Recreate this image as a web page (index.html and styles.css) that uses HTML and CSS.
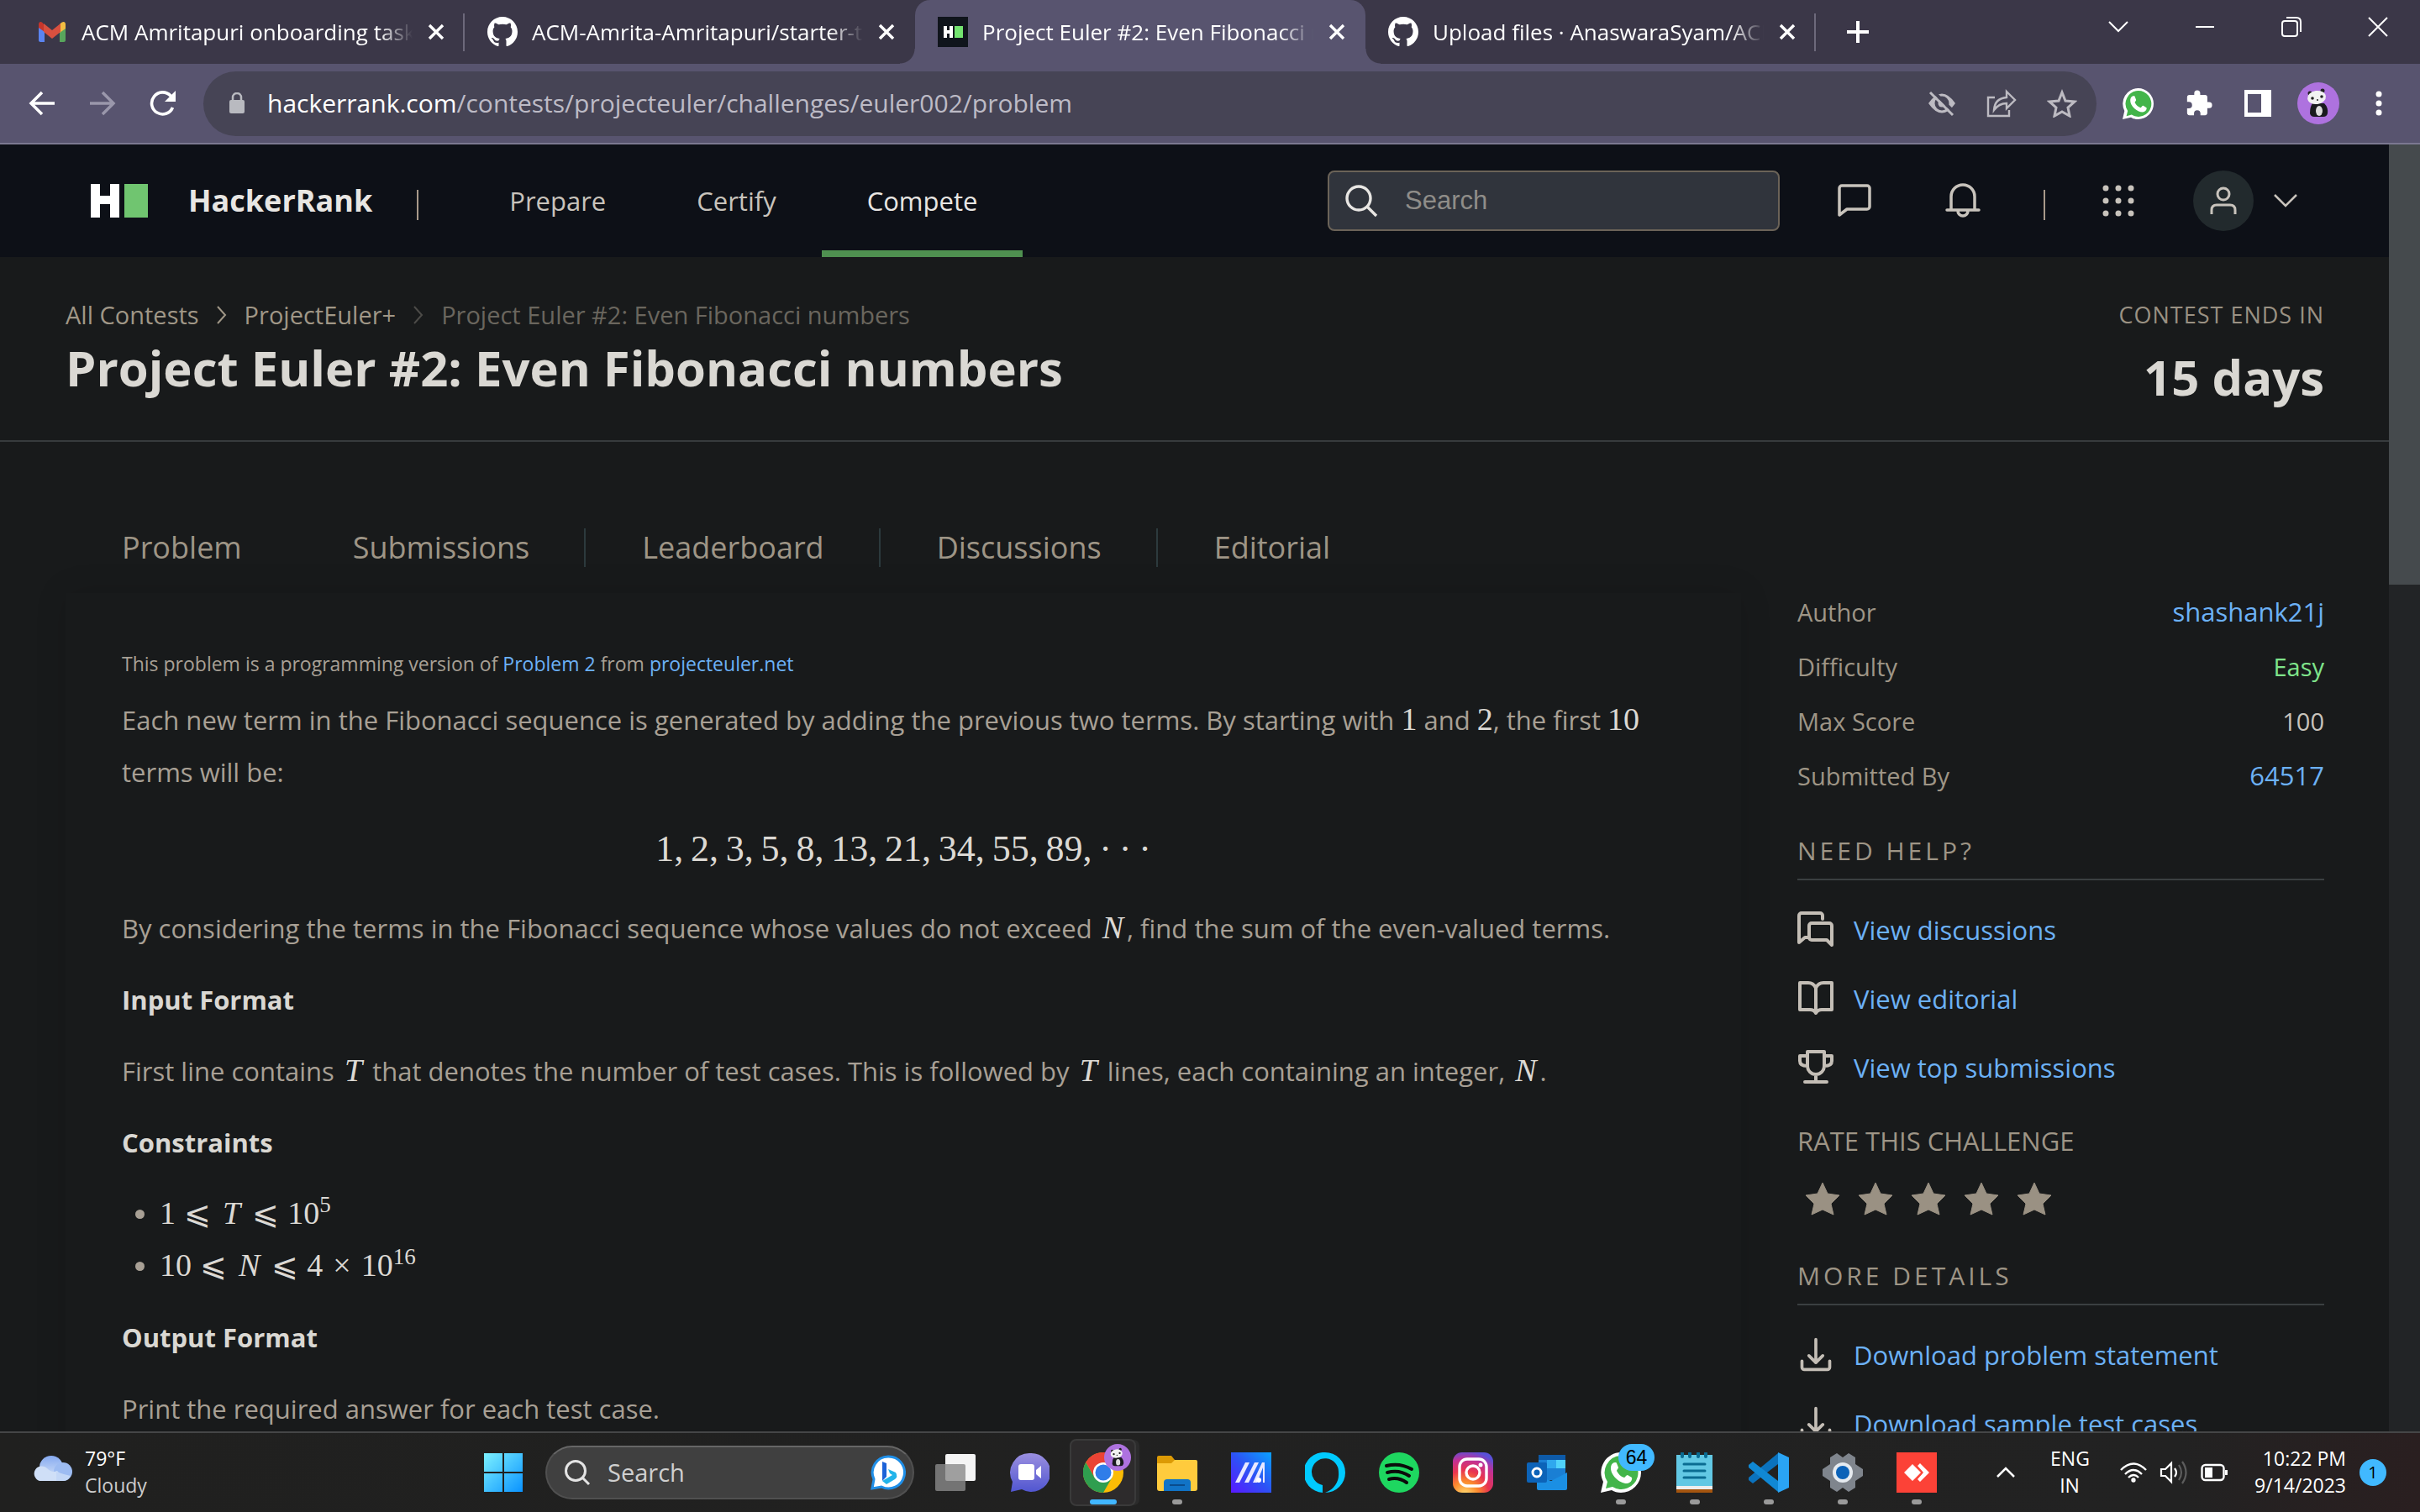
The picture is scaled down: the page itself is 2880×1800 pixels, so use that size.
FILE: index.html
```html
<!DOCTYPE html>
<html lang="en">
<head>
<meta charset="utf-8">
<title>Project Euler #2: Even Fibonacci numbers</title>
<link rel="stylesheet" href="styles.css">
</head>
<body>
<svg class="defs" aria-hidden="true">
  <symbol id="i-x" viewBox="0 0 20 20"><path d="M2 2l16 16M18 2L2 18" stroke="currentColor" stroke-width="3.4"/></symbol>
  <symbol id="i-github" viewBox="0 0 16 16"><path fill="currentColor" d="M8 0C3.58 0 0 3.58 0 8c0 3.54 2.29 6.53 5.47 7.59.4.07.55-.17.55-.38 0-.19-.01-.82-.01-1.49-2.01.37-2.53-.49-2.69-.94-.09-.23-.48-.94-.82-1.13-.28-.15-.68-.52-.01-.53.63-.01 1.08.58 1.23.82.72 1.21 1.87.87 2.33.66.07-.52.28-.87.51-1.07-1.78-.2-3.64-.89-3.64-3.95 0-.87.31-1.59.82-2.15-.08-.2-.36-1.02.08-2.12 0 0 .67-.21 2.2.82.64-.18 1.32-.27 2-.27s1.36.09 2 .27c1.53-1.04 2.2-.82 2.2-.82.44 1.1.16 1.92.08 2.12.51.56.82 1.27.82 2.15 0 3.07-1.87 3.75-3.65 3.95.29.25.54.73.54 1.48 0 1.07-.01 1.93-.01 2.2 0 .21.15.46.55.38A8.01 8.01 0 0 0 16 8c0-4.42-3.58-8-8-8z"/></symbol>
  <symbol id="i-star" viewBox="0 0 42 40"><path fill="currentColor" d="M21 1l6 13 14 2-10 10 3 13-13-6-13 6 3-13L1 16l14-2z" stroke="currentColor" stroke-width="1" stroke-linejoin="round"/></symbol>
  <symbol id="i-download" viewBox="0 0 24 24"><path d="M12 2v15M7.500 12.500L12 17l4.500-4.500M3 16v4a1.500 1.500 0 0 0 1.500 1.500h15A1.500 1.500 0 0 0 21 20v-4" fill="none" stroke="currentColor" stroke-width="2" stroke-linecap="round" stroke-linejoin="round"/></symbol>
  <symbol id="i-whatsapp" viewBox="0 0 48 48"><path fill="#fff" d="M24 0a24 24 0 0 1 0 48c-4 0-8-1-11-3L0 48l3-13A24 24 0 0 1 24 0z"/><path fill="#43b54a" d="M24 4a20 20 0 1 1-10 37l-8 2 2-8A20 20 0 0 1 24 4z"/><path fill="#fff" d="M17 12c1 0 2 0 2 1l2 5c0 1-2 3-2 4 2 4 5 7 9 8 1 0 2-3 4-3l5 3c1 3-2 7-6 7-9 0-19-10-19-18 0-4 2-7 5-7z"/></symbol>
  <symbol id="i-panda" viewBox="0 0 50 50"><circle cx="25" cy="25" r="25" fill="#ae72df"/><path fill="#191a1e" d="M18 25h14q5 5 4 12-1 4-5 4H20q-4 0-5-4 0-8 3-12z"/><ellipse cx="26" cy="34" rx="4" ry="6" fill="#ddd"/><circle cx="15" cy="13" r="2.500" fill="#222"/><circle cx="30" cy="10" r="2.500" fill="#222"/><ellipse cx="23" cy="18" rx="11" ry="8" transform="rotate(-8 23 18)" fill="#f2f2f2"/><circle cx="18" cy="19" r="1.800" fill="#222"/><circle cx="29" cy="17" r="1.800" fill="#222"/><circle cx="24" cy="21" r="1" fill="#222"/></symbol>
</svg>

<header class="browser">
  <div class="tabstrip">
    <div class="tab">
      <svg class="favicon" viewBox="0 0 36 36"><path fill="#c5362b" d="M2 9v5l6 5V9C6 5 2 5 2 9z"/><path fill="#5b84f0" d="M2 13l7 5v12H4c-1 0-2-1-2-2z"/><path fill="#58a55c" d="M34 13l-7 5v12h5c1 0 2-1 2-2z"/><path fill="#f2bd42" d="M34 9v5l-7 5V9c3-4 7-4 7 0z"/><path fill="#d8503f" d="M8 8l10 8 10-8v10l-10 8-10-8z"/></svg>
      <span class="tab-title">ACM Amritapuri onboarding task</span>
      <button class="icon-btn" aria-label="Close tab"><svg class="x"><use href="#i-x"/></svg></button>
    </div>
    <div class="tab before-active">
      <svg class="favicon"><use href="#i-github"/></svg>
      <span class="tab-title">ACM-Amrita-Amritapuri/starter-task</span>
      <button class="icon-btn" aria-label="Close tab"><svg class="x"><use href="#i-x"/></svg></button>
    </div>
    <div class="tab active">
      <svg class="favicon" viewBox="0 0 36 36"><path fill="#10151c" d="M0 0h36v36H0z"/><path fill="#fff" d="M7 11h4v5h3v-5h4v14h-4v-5h-3v5H7z"/><path fill="#73e36f" d="M20 11h10v14H20z"/></svg>
      <span class="tab-title">Project Euler #2: Even Fibonacci numbers</span>
      <button class="icon-btn" aria-label="Close tab"><svg class="x"><use href="#i-x"/></svg></button>
    </div>
    <div class="tab">
      <svg class="favicon"><use href="#i-github"/></svg>
      <span class="tab-title">Upload files · AnaswaraSyam/ACM</span>
      <button class="icon-btn" aria-label="Close tab"><svg class="x"><use href="#i-x"/></svg></button>
    </div>
    <button class="icon-btn new-tab" aria-label="New tab"><svg width="28" height="28" viewBox="0 0 28 28"><path d="M14 1v26M1 14h26" stroke="#fff" stroke-width="4"/></svg></button>
    <div class="window-controls">
      <button class="icon-btn" aria-label="Search tabs"><svg width="24" height="24" viewBox="0 0 24 24"><path d="M1 6l11 11L23 6"/></svg></button>
      <button class="icon-btn" aria-label="Minimise"><svg width="24" height="24" viewBox="0 0 24 24"><path d="M1 12h22"/></svg></button>
      <button class="icon-btn" aria-label="Restore"><svg width="24" height="24" viewBox="0 0 24 24"><rect x="1" y="5" width="18" height="18" rx="3"/><path d="M6 1h12q5 0 5 5v12"/></svg></button>
      <button class="icon-btn" aria-label="Close window"><svg width="24" height="24" viewBox="0 0 24 24"><path d="M1 1l22 22M23 1L1 23"/></svg></button>
    </div>
  </div>
  <div class="toolbar">
    <div class="nav-buttons">
      <button class="icon-btn" aria-label="Back"><svg width="32" height="32" viewBox="0 0 32 32"><path d="M31 16H3M16 3L3 16l13 13" fill="none" stroke="#fff" stroke-width="3.500"/></svg></button>
      <button class="icon-btn" aria-label="Forward"><svg width="32" height="32" viewBox="0 0 32 32"><path d="M1 16h28M16 3l13 13-13 13" fill="none" stroke="#9a97ab" stroke-width="3.500"/></svg></button>
      <button class="icon-btn" aria-label="Reload"><svg width="32" height="32" viewBox="0 0 32 32"><path d="M27.500 21A13 13 0 1 1 25 7l3 4" fill="none" stroke="#fff" stroke-width="3.600"/><path d="M31 1v13H18z" fill="#fff"/></svg></button>
    </div>
    <div class="address">
      <svg width="18" height="26" viewBox="0 0 18 26"><rect y="9" width="18" height="16" rx="2" fill="#b9bac0"/><path d="M4 10V6a5 5 0 0 1 10 0v4" fill="none" stroke="#b9bac0" stroke-width="2.500"/></svg>
      <span class="url"><span class="host">hackerrank.com</span>/contests/projecteuler/challenges/euler002/problem</span>
      <div class="address-actions">
        <button class="icon-btn" aria-label="Third-party cookies blocked"><svg width="34" height="34" viewBox="0 0 34 34"><path d="M1 17Q17-6 33 17 17 40 1 17z" fill="#bdbbc2"/><circle cx="17" cy="17" r="8.500" fill="#464455"/><circle cx="17" cy="17" r="4.500" fill="#bdbbc2"/><path d="M5 1l28 28" stroke="#464455" stroke-width="4"/><path d="M3 4l27 27" stroke="#bdbbc2" stroke-width="3"/></svg></button>
        <button class="icon-btn" aria-label="Share"><svg width="36" height="34" viewBox="0 0 36 34" fill="none" stroke="#bdbbc2" stroke-width="2.400"><path d="M10 10H2v22h25v-7"/><path d="M24 3l10 10-10 10v-6q-9 0-15 8 1-14 15-15z"/></svg></button>
        <button class="icon-btn" aria-label="Bookmark"><svg width="36" height="34" viewBox="0 0 36 34"><path d="M18 4l4 10 11 1-8 7 2 10-9-5-9 5 2-10-8-7 11-1z" fill="none" stroke="#bdbbc2" stroke-width="3"/></svg></button>
      </div>
    </div>
    <div class="extensions">
      <button class="icon-btn" aria-label="WhatsApp extension"><svg width="37" height="37"><use href="#i-whatsapp"/></svg></button>
      <button class="icon-btn" aria-label="Extensions"><svg width="34" height="34" viewBox="0 0 24 24"><path fill="#fff" d="M20.500 11H19V7a2 2 0 0 0-2-2h-4V3.500a2.500 2.500 0 0 0-5 0V5H4a2 2 0 0 0-2 2v3.800h1.500a2.700 2.700 0 0 1 0 5.400H2V20a2 2 0 0 0 2 2h3.800v-1.500a2.700 2.700 0 0 1 5.400 0V22H17a2 2 0 0 0 2-2v-4h1.500a2.500 2.500 0 0 0 0-5z"/></svg></button>
      <button class="icon-btn" aria-label="Side panel"><svg width="32" height="32" viewBox="0 0 32 32"><path fill="#fff" fill-rule="evenodd" d="M0 0h32v32H0zM4 5v22h16V5z"/></svg></button>
      <button class="icon-btn" aria-label="Profile"><svg width="50" height="50"><use href="#i-panda"/></svg></button>
      <button class="icon-btn" aria-label="Menu"><svg width="8" height="30" viewBox="0 0 8 30" fill="#fff"><circle cx="4" cy="4" r="3.500"/><circle cx="4" cy="15" r="3.500"/><circle cx="4" cy="26" r="3.500"/></svg></button>
    </div>
  </div>
</header>

<div class="viewport">
  <div class="page">
    <header class="site-header">
      <a class="brand" href="#"><svg width="68" height="40" viewBox="0 0 68 40"><path fill="#fff" d="M0 0h11v14h12V0h11v40H23V24H11v16H0z"/><path fill="#70c570" d="M40 0h28v40H40z"/></svg><span>HackerRank</span></a>
      <span class="pipe"></span>
      <nav class="site-nav"><a href="#">Prepare</a><a href="#">Certify</a><a class="current" href="#">Compete</a></nav>
      <label class="search"><svg width="40" height="40" viewBox="0 0 40 40"><circle cx="17" cy="17" r="14" fill="none" stroke="#e8e6e3" stroke-width="3.400"/><path d="M27 27l11 11" stroke="#e8e6e3" stroke-width="3.400"/></svg><input type="text" placeholder="Search" aria-label="Search"></label>
      <div class="site-actions">
        <button class="icon-btn" aria-label="Messages"><svg width="40" height="40" viewBox="0 0 40 40"><path d="M2 37V5a3 3 0 0 1 3-3h30a3 3 0 0 1 3 3v22a3 3 0 0 1-3 3H11z" fill="none" stroke="#c8c3bc" stroke-width="3.500" stroke-linejoin="round"/></svg></button>
        <button class="icon-btn" aria-label="Notifications"><svg width="42" height="42" viewBox="0 0 42 42" fill="none" stroke="#c8c3bc" stroke-width="3.500" stroke-linecap="round"><path d="M2 32h38M7 31V16a14 14 0 0 1 28 0v15M15 33a6 6 0 0 0 12 0"/></svg></button>
        <span class="pipe"></span>
        <button class="icon-btn" aria-label="Apps"><svg width="38" height="38" viewBox="0 0 38 38" fill="#c8c3bc"><circle cx="4" cy="4" r="3.500"/><circle cx="19" cy="4" r="3.500"/><circle cx="34" cy="4" r="3.500"/><circle cx="4" cy="19" r="3.500"/><circle cx="19" cy="19" r="3.500"/><circle cx="34" cy="19" r="3.500"/><circle cx="4" cy="34" r="3.500"/><circle cx="19" cy="34" r="3.500"/><circle cx="34" cy="34" r="3.500"/></svg></button>
        <button class="icon-btn account" aria-label="Account"><span class="avatar"><svg width="32" height="34" viewBox="0 0 32 34" fill="none" stroke="#c8c3bc" stroke-width="3"><circle cx="16" cy="9" r="7"/><path d="M2 33v-5q0-6 6-6h16q6 0 6 6v5"/></svg></span><svg width="30" height="18" viewBox="0 0 30 18"><path d="M2 2l13 13L28 2" fill="none" stroke="#c8c3bc" stroke-width="2.500"/></svg></button>
      </div>
    </header>

    <section class="contest-head">
      <div>
        <nav class="crumbs"><a href="#">All Contests</a><svg class="crumb-sep" viewBox="0 0 12 22"><path d="M1 1l9 10-9 10"/></svg><a href="#">ProjectEuler+</a><svg class="crumb-sep dim" viewBox="0 0 12 22"><path d="M1 1l9 10-9 10"/></svg><span class="here">Project Euler #2: Even Fibonacci numbers</span></nav>
        <h1>Project Euler #2: Even Fibonacci numbers</h1>
      </div>
      <div class="countdown"><div class="countdown-label">CONTEST ENDS IN</div><div class="countdown-value">15 days</div></div>
    </section>

    <nav class="challenge-tabs"><a href="#">Problem</a><a href="#">Submissions</a><a href="#">Leaderboard</a><a href="#">Discussions</a><a href="#">Editorial</a></nav>

    <div class="columns">
      <main class="statement">
        <p class="note">This problem is a programming version of <a href="#">Problem 2</a> from <a href="#">projecteuler.net</a></p>
        <p>Each new term in the Fibonacci sequence is generated by adding the previous two terms. By starting with <span class="math">1</span> and <span class="math">2</span>, the first <span class="math">10</span> terms will be:</p>
        <p class="display-math">1,&thinsp;2,&thinsp;3,&thinsp;5,&thinsp;8,&thinsp;13,&thinsp;21,&thinsp;34,&thinsp;55,&thinsp;89,&thinsp;·&thinsp;·&thinsp;·</p>
        <p>By considering the terms in the Fibonacci sequence whose values do not exceed <var>N</var>, find the sum of the even-valued terms.</p>
        <h2>Input Format</h2>
        <p>First line contains <var>T</var> that denotes the number of test cases. This is followed by <var>T</var> lines, each containing an integer, <var>N</var>.</p>
        <h2>Constraints</h2>
        <ul>
          <li><span class="math">1<span class="rel">⩽</span><var>T</var><span class="rel">⩽</span>10<sup>5</sup></span></li>
          <li><span class="math">10<span class="rel">⩽</span><var>N</var><span class="rel">⩽</span>4<span class="times">×</span>10<sup>16</sup></span></li>
        </ul>
        <h2>Output Format</h2>
        <p>Print the required answer for each test case.</p>
      </main>
      <aside class="sidebar">
        <dl class="facts">
          <div><dt>Author</dt><dd class="big"><a href="#">shashank21j</a></dd></div>
          <div><dt>Difficulty</dt><dd class="easy">Easy</dd></div>
          <div><dt>Max Score</dt><dd>100</dd></div>
          <div><dt>Submitted By</dt><dd class="big"><a href="#">64517</a></dd></div>
        </dl>
        <h3>NEED HELP?</h3>
        <ul class="links">
          <li><svg class="link-icon" viewBox="0 0 44 44"><path d="M30 9V5a3 3 0 0 0-3-3H5a3 3 0 0 0-3 3v32l7-6h3M17 14h21a3 3 0 0 1 3 3v23l-6-6H17a3 3 0 0 1-3-3V17a3 3 0 0 1 3-3z"/></svg><a href="#">View discussions</a></li>
          <li><svg class="link-icon" viewBox="0 0 44 44"><path d="M22 9q-3-6-9-6H3v32h12q5 0 7 4 2-4 7-4h12V3H31q-6 0-9 6zv30"/></svg><a href="#">View editorial</a></li>
          <li><svg class="link-icon" viewBox="0 0 44 44"><path d="M12 3h20v17a10 10 0 0 1-20 0zM12 8H3v6q0 6 9 6M32 8h9v6q0 6-9 6M22 30v9M9 39h26"/></svg><a href="#">View top submissions</a></li>
        </ul>
        <h4>RATE THIS CHALLENGE</h4>
        <div class="stars"><button class="icon-btn" aria-label="1 star"><svg><use href="#i-star"/></svg></button><button class="icon-btn" aria-label="2 stars"><svg><use href="#i-star"/></svg></button><button class="icon-btn" aria-label="3 stars"><svg><use href="#i-star"/></svg></button><button class="icon-btn" aria-label="4 stars"><svg><use href="#i-star"/></svg></button><button class="icon-btn" aria-label="5 stars"><svg><use href="#i-star"/></svg></button></div>
        <h3>MORE DETAILS</h3>
        <ul class="links">
          <li><svg class="link-icon thin"><use href="#i-download"/></svg><a href="#">Download problem statement</a></li>
          <li><svg class="link-icon thin"><use href="#i-download"/></svg><a href="#">Download sample test cases</a></li>
        </ul>
      </aside>
    </div>
  </div>
  <div class="scrollbar"><div class="thumb"></div></div>
</div>

<footer class="taskbar">
  <div class="weather">
    <svg width="50" height="32" viewBox="0 0 50 32"><defs><linearGradient id="g-cloud" x2="0" y2="1"><stop stop-color="#86aaf0"/><stop offset="1" stop-color="#d6e4f8"/></linearGradient></defs><circle cx="24" cy="15" r="14" fill="url(#g-cloud)"/><circle cx="38" cy="20" r="11" fill="#9dbcf2"/><path fill="#cfdff7" d="M10 31a9 9 0 1 1 9-15q6 6 12 3l6 6q4 6-4 6z"/><path fill="#c3d7f6" d="M30 31V20q8 3 17 5-3 6-9 6z"/></svg>
    <div class="label"><div>79°F</div><div class="muted">Cloudy</div></div>
  </div>
  <div class="dock">
    <button class="app start" aria-label="Start"><svg viewBox="0 0 48 48"><defs><linearGradient id="g-win" x2="1" y2="1"><stop stop-color="#7cf1ff"/><stop offset="1" stop-color="#0a93ff"/></linearGradient></defs><path fill="url(#g-win)" d="M1 1h22v22H1zM25 1h22v22H25zM1 25h22v22H1zM25 25h22v22H25z"/></svg></button>
    <label class="os-search"><svg width="32" height="32" viewBox="0 0 32 32" fill="none" stroke="#e4e4e4" stroke-width="3"><circle cx="14" cy="14" r="11.500"/><path d="M22 22l8 8"/></svg><input type="text" placeholder="Search" aria-label="Search Windows"><svg width="42" height="42" viewBox="0 0 42 42"><path d="M21 2a19 19 0 1 1-8 36L2 40l2-11A19 19 0 0 1 21 2z" fill="#fff" stroke="#1f8fe8" stroke-width="3"/><path d="M14 8l5 2v16l-5 5z" fill="#1b62d8"/><path d="M14 31l12-7-3-2-2-5 9 4q3 5-1 8l-10 6z" fill="#22b4ea"/></svg></label>
    <button class="app" aria-label="Task view"><svg viewBox="0 0 48 48"><rect x="12" y="2" width="36" height="32" rx="2" fill="#f4f4f4"/><rect y="14" width="36" height="32" rx="2" fill="#8a8a8a" opacity=".8"/></svg></button>
    <button class="app" aria-label="Chat"><svg viewBox="0 0 48 48"><defs><linearGradient id="g-chat" x2="0" y2="1"><stop stop-color="#9a8fe0"/><stop offset="1" stop-color="#5156d0"/></linearGradient></defs><path fill="url(#g-chat)" d="M25 1a23 23 0 1 1-10 43L2 47l2-12A23 23 0 0 1 25 1z"/><rect x="11" y="14" width="19" height="19" rx="3" fill="#fff"/><path fill="#fff" d="M32 21l6-5v15l-6-5z"/></svg></button>
    <button class="app focused" aria-label="Chrome"><svg viewBox="0 0 48 48"><circle cx="24" cy="24" r="24" fill="#fbbc05"/><path fill="#ea4335" d="M24 12h20.800A24 24 0 0 0 3.200 12l10.400 18z"/><path fill="#2f9e4f" d="M34.400 30L24 48A24 24 0 0 1 3.200 12l10.400 18z"/><circle cx="24" cy="24" r="12" fill="#fff"/><circle cx="24" cy="24" r="9.500" fill="#2f7de9"/></svg><svg class="app-avatar"><use href="#i-panda"/></svg></button>
    <button class="app running" aria-label="File Explorer"><svg viewBox="0 0 48 48"><path fill="#dc9a05" d="M2 4h15l4 5v8H0V6q0-2 2-2z"/><path fill="#ffcb3d" d="M0 13h17l4-4h25q2 0 2 2v32q0 3-3 3H3q-3 0-3-3z"/><path fill="#1173c6" d="M8 46V36q0-4 4-4h24q4 0 4 4v10z"/><path d="M15 39h18" stroke="#0a4c8c" stroke-width="2"/></svg></button>
    <button class="app" aria-label="MyASUS"><svg viewBox="0 0 48 48"><defs><linearGradient id="g-ma" x1="1" x2="0" y2="1"><stop stop-color="#0aa2ff"/><stop offset=".5" stop-color="#2d52f5"/><stop offset="1" stop-color="#5a18ff"/></linearGradient></defs><path fill="url(#g-ma)" d="M0 0h48v48H0z"/><path fill="#e8e8ff" d="M5 36l12-24h5L10 36zM16 36l12-24h5L21 36zM26 36l11-24h3v24h-2V18l-7 18z"/><circle cx="33" cy="33" r="3" fill="#fff"/></svg></button>
    <button class="app" aria-label="Alexa"><svg viewBox="0 0 48 48"><path fill="#00caff" fill-rule="evenodd" d="M24 0a24 24 0 0 1 0 48 23 23 0 0 0 16-24 16 16 0 1 0-19 15v9A24 24 0 0 1 24 0z"/></svg></button>
    <button class="app" aria-label="Spotify"><svg viewBox="0 0 48 48"><circle cx="24" cy="24" r="24" fill="#1ed760"/><path d="M9 16q16-4 30 4M10 24q14-4 26 4M12 32q11-3 21 4" fill="none" stroke="#0b0b0b" stroke-width="4" stroke-linecap="round"/></svg></button>
    <button class="app" aria-label="Instagram"><svg viewBox="0 0 48 48"><defs><radialGradient id="g-ig" cx=".3" cy="1.050" r="1.100"><stop stop-color="#ffdd72"/><stop offset=".3" stop-color="#fb8a2e"/><stop offset=".55" stop-color="#e9344f"/><stop offset=".8" stop-color="#c13196"/><stop offset="1" stop-color="#5a50d8"/></radialGradient></defs><rect width="48" height="48" rx="11" fill="url(#g-ig)"/><g fill="none" stroke="#fff" stroke-width="3.400"><rect x="8" y="8" width="32" height="32" rx="9"/><circle cx="24" cy="24" r="8"/></g><circle cx="33" cy="15" r="2.500" fill="#fff"/></svg></button>
    <button class="app" aria-label="Outlook"><svg viewBox="0 0 48 48"><rect x="14" y="3" width="32" height="30" rx="2" fill="#1a7fd4"/><path fill="#0d5aa8" d="M14 3h32v6H14z"/><path fill="#50d2fa" d="M35 9h11v10H35z"/><path fill="#2fa8ee" d="M24 9h11v10H24z"/><path fill="#1b8fe3" d="M12 28l17 6 19-10v19q0 2-2 2H14q-2 0-2-2z"/><rect y="12" width="24" height="24" rx="2" fill="#0c63b8"/><circle cx="12" cy="24" r="5" fill="none" stroke="#fff" stroke-width="3"/></svg></button>
    <button class="app running" aria-label="WhatsApp, 64 unread"><svg><use href="#i-whatsapp"/></svg><span class="app-badge">64</span></button>
    <button class="app running" aria-label="Notepad"><svg viewBox="0 0 48 48"><path fill="#a4550f" d="M2 42h43v6H2z"/><path fill="#eee" d="M2 38h43v6H2z"/><path fill="#62c8e4" d="M2 3h43v37H2z"/><path d="M9 1v4M18 1v4M28 1v4M37 1v4" stroke="#0a6c92" stroke-width="4" stroke-linecap="round"/><path d="M11 14h25M11 22h25M11 30h25" stroke="#0a6c92" stroke-width="3" stroke-linecap="round"/></svg></button>
    <button class="app running" aria-label="Visual Studio Code"><svg viewBox="0 0 48 48"><path fill="#0b72bd" d="M35 1v13L5 37l-5-4v-3z"/><path fill="#1088d4" d="M35 47V34L5 11l-5 4v3z"/><path fill="#2aa4f4" d="M35 0l13 6v36l-13 6z"/></svg></button>
    <button class="app running" aria-label="Settings"><svg viewBox="0 0 48 48"><path fill="#7f858d" d="M17 1l7 5 7-5 8 5v8l9 6v8l-9 6v8l-8 5-7-5-7 5-8-5v-8l-9-6v-8l9-6V6z"/><circle cx="24" cy="24" r="12" fill="#e6ebf0"/><circle cx="24" cy="24" r="8" fill="#0b62b8"/></svg></button>
    <button class="app running" aria-label="AnyDesk"><svg viewBox="0 0 48 48"><path fill="#fc4237" d="M0 0h48v48H0z"/><path fill="#fff" d="M19 14l10 10-10 10L9 24zM25 16l3-3 11 11-11 11-3-3 7-8z"/></svg></button>
  </div>
  <div class="tray">
    <svg width="22" height="14" viewBox="0 0 22 14"><path d="M1 12L11 2l10 10" fill="none" stroke="#fff" stroke-width="2.500"/></svg>
    <div class="lang label"><div>ENG</div><div>IN</div></div>
    <div class="status">
      <svg width="32" height="24" viewBox="0 0 32 24" fill="none" stroke="#fff" stroke-width="2.400"><path d="M1 9q15-15 30 0M6 14q10-10 20 0M10 18q6-6 12 0"/><circle cx="16" cy="21" r="1.500"/></svg>
      <svg width="34" height="28" viewBox="0 0 34 28" fill="none" stroke="#fff" stroke-width="2.200"><path d="M2 10v8h5l7 7V3l-7 7zM18 9q4 5 0 10"/><path d="M23 5q6 9 0 18M27 1q9 13 0 26" stroke="#5c5c5c"/></svg>
      <svg width="32" height="22" viewBox="0 0 32 22"><rect x="1.500" y="2" width="26" height="18" rx="4" fill="none" stroke="#fff" stroke-width="2.400"/><path fill="#fff" d="M5 5h9v12H5zM29 8h3v6h-3z"/></svg>
    </div>
    <div class="clock label"><div>10:22 PM</div><div>9/14/2023</div></div>
    <span class="notice-count">1</span>
  </div>
</footer>
</body>
</html>
```
FILE: styles.css
```css
* { box-sizing: border-box; }
body {
  margin: 0;
  height: 100vh;
  display: flex;
  flex-direction: column;
  overflow: hidden;
  background: #181a1b;
  font-family: "Open Sans", "Noto Sans", sans-serif;
  color: #a8a095;
}
a { color: inherit; text-decoration: none; }
svg { display: block; flex: none; }
.defs { position: absolute; width: 0; height: 0; }
h1, h2, h3, h4, p, ul, dl, dd { margin: 0; padding: 0; }
.icon-btn { border: 0; padding: 0; background: none; color: inherit; display: flex; align-items: center; justify-content: center; flex: none; }

/* Browser chrome */
.browser { flex: none; color: #fff; border-bottom: 2px solid #7b7891; background: #58546f; }
.tabstrip { display: flex; align-items: center; height: 76px; padding-left: 17px; background: #3b3748; }
.tab { position: relative; flex: 0 1 536px; min-width: 0; height: 76px; display: flex; align-items: center; padding: 0 24px 0 27px; }
.tab::after { content: ""; position: absolute; right: 0; top: 16px; width: 2px; height: 45px; background: #6d697b; }
.tab.before-active::after, .tab.active::after { display: none; }
.tab.active { background: #58546f; border-radius: 18px 18px 0 0; }
.tab.active::before {
  content: ""; position: absolute; left: -18px; right: -18px; bottom: 0; height: 18px;
  background:
    radial-gradient(circle at 0 0, transparent 17px, #58546f 18px) left / 18px 18px no-repeat,
    radial-gradient(circle at 100% 0, transparent 17px, #58546f 18px) right / 18px 18px no-repeat;
}
.favicon { width: 36px; height: 36px; margin-right: 17px; }
.tab-title {
  flex: 1; min-width: 0; overflow: hidden; white-space: nowrap; font-size: 26px; line-height: 36px; margin-right: 14px;
  -webkit-mask-image: linear-gradient(to right, #000 calc(100% - 44px), transparent calc(100% - 4px));
  mask-image: linear-gradient(to right, #000 calc(100% - 44px), transparent calc(100% - 4px));
}
.x { width: 20px; height: 20px; }
.new-tab { margin-left: 36px; }
.window-controls { margin-left: auto; padding: 0 38px 12px 0; display: flex; gap: 79px; }
.window-controls svg { fill: none; stroke: #fff; stroke-width: 2; }
.toolbar { display: flex; align-items: center; height: 94px; padding: 0 45px 0 34px; }
.nav-buttons { display: flex; gap: 40px; margin-right: 32px; }
.address { flex: 1; height: 77px; border-radius: 39px; background: #464455; display: flex; align-items: center; padding: 0 23px 0 31px; }
.url { margin-left: 27px; font-size: 30px; line-height: 42px; color: #bdbbc6; }
.host { color: #fff; }
.address-actions { margin-left: auto; display: flex; gap: 36px; }
.extensions { display: flex; align-items: center; margin-left: 31px; }
.extensions .icon-btn + .icon-btn { margin-left: 37px; }
.extensions .icon-btn:nth-child(4) { margin-left: 31px; }
.extensions .icon-btn:last-child { margin-left: 43px; }

/* Web page */
.viewport { flex: 1; min-height: 0; display: flex; overflow: hidden; }
.page { flex: 1; min-width: 0; }
.scrollbar { flex: none; width: 37px; background: #222426; }
.thumb { height: 524px; background: #454a4d; }
.site-header { display: flex; align-items: center; height: 134px; padding: 0 108px; background: #0d1017; font-size: 31px; }
.brand { display: flex; align-items: center; gap: 48px; font-size: 36px; line-height: 48px; font-weight: 700; color: #e8e6e3; }
.pipe { width: 2px; height: 36px; background: #a8998a; margin-top: 10px; }
.brand + .pipe { margin-left: 53px; }
.site-nav { display: flex; align-self: stretch; margin-left: 54px; }
.site-nav a { display: flex; align-items: center; padding: 8px 54px 0; border-bottom: 8px solid transparent; color: #c8c3bc; }
.site-nav .current { color: #e8e6e3; border-color: #4f9050; }
.search { margin-left: auto; width: 538px; height: 72px; display: flex; align-items: center; padding-left: 18px; background: #30343c; border: 2px solid #6b6358; border-radius: 8px; }
.search input { flex: 1; min-width: 0; margin-left: 32px; padding: 0; border: 0; outline: 0; background: none; font: 31px/42px "Liberation Sans", Arial, sans-serif; color: #e8e6e3; }
.search input::placeholder { color: #8f8d89; opacity: 1; }
.site-actions { display: flex; align-items: center; margin-left: 69px; }
.site-actions > * + * { margin-left: 88px; }
.site-actions .pipe { margin-left: 75px; }
.site-actions .pipe + .icon-btn { margin-left: 68px; }
.site-actions .account { margin-left: 70px; gap: 23px; }
.avatar { width: 72px; height: 72px; border-radius: 50%; background: #222a2d; display: flex; align-items: center; justify-content: center; }

.contest-head { display: flex; justify-content: space-between; align-items: flex-start; padding: 47px 77px 34px 78px; border-bottom: 2px solid #373b3d; }
.crumbs { display: flex; align-items: center; font-size: 29px; line-height: 44px; color: #a09787; }
.crumb-sep { width: 12px; height: 22px; margin: 0 21px; fill: none; stroke: #a09787; stroke-width: 2; }
.crumb-sep.dim { stroke: #4c4b48; }
.here { color: #6a665e; }
h1, .countdown-value { font-size: 58px; line-height: 82px; font-weight: 700; color: #dad8d3; }
.countdown { text-align: right; }
.countdown-label { font-size: 27px; line-height: 44px; letter-spacing: 1px; color: #9a9183; }
.countdown-value { margin-top: 11px; }

.challenge-tabs { display: flex; padding: 103px 78px 0; font-size: 36px; line-height: 46px; color: #9e9586; }
.challenge-tabs a { padding: 0 65px 0 67px; border-right: 2px solid #2c3a3d; }
.challenge-tabs a:first-child, .challenge-tabs a:last-child { border: 0; }

.columns { display: flex; align-items: flex-start; gap: 67px; padding: 0 77px 0 78px; }
.statement { flex: 1; min-width: 0; margin-top: 31px; padding: 66px 67px 120px; box-shadow: 0 0 36px rgba(0, 0, 0, .12); font-size: 31px; line-height: 62px; }
.statement p, .statement ul, h2 { margin-bottom: 23px; }
.statement .note { font-size: 23px; line-height: 36px; margin-bottom: 18px; }
.statement a, .sidebar a { color: #6cb1f6; }
.math, var, .display-math { font-family: "Liberation Serif", "Times New Roman", serif; color: #dcd9d4; }
.math, var { font-size: 38px; line-height: 0; }
var { margin: 0 4px; }
.statement .display-math { font-size: 44px; text-align: center; margin: 30px 0 32px; }
h2 { font-size: 31px; line-height: 62px; font-weight: 700; color: #dad8d3; }
.statement ul { padding-left: 45px; }
.rel { margin: 0 10px; }
.times { margin: 0 12px; }
sup { font-size: 27px; line-height: 0; vertical-align: 14px; }

.sidebar { flex: 0 0 627px; padding-top: 21px; color: #9e9586; font-size: 31px; }
.facts { font-size: 29px; line-height: 65px; }
.facts div { display: flex; justify-content: space-between; height: 65px; }
.facts dd { color: #c8c3bc; }
.facts .big { font-size: 31px; }
.facts .easy { color: #7fe48b; }
h3 { font-size: 30px; line-height: 44px; font-weight: 400; letter-spacing: 4px; padding-bottom: 11px; margin: 35px 0 38px; border-bottom: 2px solid #3b3f41; }
.links { list-style: none; display: flex; flex-direction: column; gap: 40px; }
.links li { display: flex; align-items: center; gap: 23px; line-height: 42px; }
.link-icon { width: 44px; height: 44px; margin-block: -4px; fill: none; stroke: #c4beb6; stroke-width: 4; stroke-linejoin: round; stroke-linecap: round; color: #c4beb6; }
h4 { font-size: 31px; line-height: 44px; font-weight: 400; margin-top: 44px; }
.stars { display: flex; gap: 21px; padding-left: 9px; margin: 27px 0 50px; }
.stars svg { width: 42px; height: 40px; color: #9a9183; }

/* Taskbar */
.taskbar { flex: none; position: relative; display: flex; align-items: center; height: 96px; padding: 0 40px 0 37px; border-top: 2px solid #454647; background: linear-gradient(90deg, #20201f, #222 90%, #2a1f20); color: #fff; font-size: 23px; line-height: 32px; }
.label { padding-bottom: 3px; }
.weather { display: flex; align-items: center; gap: 14px; width: 518px; }
.weather svg { margin-bottom: 10px; }
.muted { color: #ccc; }
.dock { display: flex; align-items: center; }
.app { position: relative; width: 88px; height: 80px; border: 0; padding: 0; background: none; display: flex; align-items: center; justify-content: center; }
.app > svg { width: 48px; height: 48px; }
.start { margin-right: 6px; }
.os-search { width: 439px; height: 64px; margin-right: 5px; border: 2px solid #505050; border-top-color: #666; border-radius: 32px; background: #404040; display: flex; align-items: center; padding: 0 8px 0 20px; }
.os-search input { flex: 1; min-width: 0; margin-left: 20px; padding: 0; border: 0; outline: 0; background: none; font: 29px/40px "Open Sans", "Noto Sans", sans-serif; color: #fff; }
.os-search input::placeholder { color: #cfcfcf; opacity: 1; }
.focused::before { content: ""; position: absolute; inset: 0 5px 0 4px; border: 2px solid #3a3a3a; border-radius: 8px; background: #2d2b2c; box-shadow: 5px 0 0 -1px #2b2b2b; }
.focused svg { position: relative; }
.focused::after, .running::after { content: ""; position: absolute; left: 50%; bottom: 2px; width: 32px; height: 6px; margin-left: -16px; border-radius: 3px; background: #41b6ff; }
.running::after { width: 12px; margin-left: -6px; background: #9a9a9a; }
.focused .app-avatar { position: absolute; right: 11px; top: 6px; width: 32px; height: 32px; }
.app-badge { position: absolute; left: 41px; top: 6px; width: 43px; height: 32px; border-radius: 16px; background: #41b9ff; color: #000; font-size: 23px; line-height: 32px; text-align: center; }
.tray { margin-left: auto; display: flex; align-items: center; }
.lang { width: 46px; margin-left: 42px; text-align: center; }
.status { display: flex; align-items: center; gap: 15px; margin-left: 37px; }
.clock { margin-left: 32px; text-align: right; }
.notice-count { width: 32px; height: 32px; margin-left: 16px; border-radius: 50%; background: #41b9ff; color: #000; text-align: center; font-size: 20px; line-height: 32px; }
```
